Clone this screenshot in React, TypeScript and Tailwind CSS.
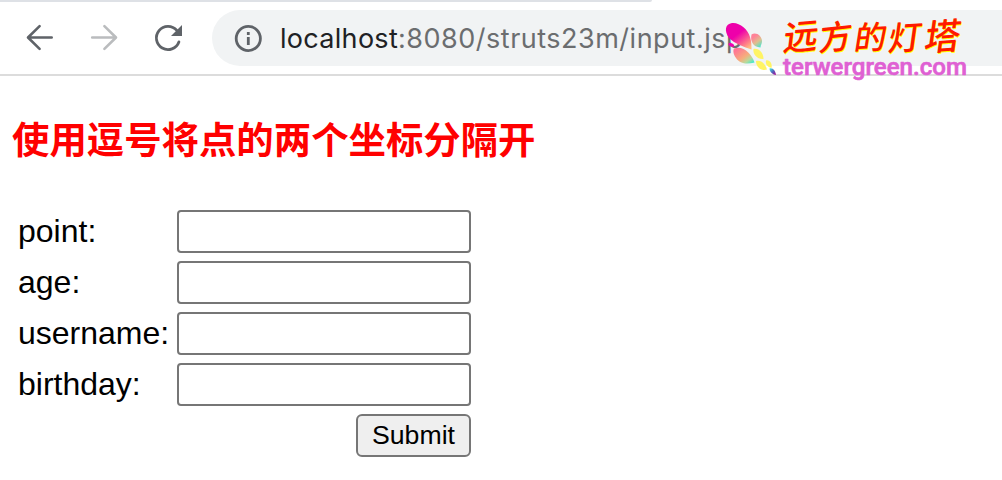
const fields = ["point", "age", "username", "birthday"];

function BackIcon() {
  return (
    <svg className="h-[30px] w-[30px] text-[#5f6368]" viewBox="0 0 30 30" fill="none" stroke="currentColor" strokeWidth="2.6" strokeLinecap="round" strokeLinejoin="round">
      <path d="M26.7 14.500H3.2M14.6 3.1L3 14.500l11.6 11.4" />
    </svg>
  );
}

function ForwardIcon() {
  return (
    <svg className="h-[30px] w-[30px] text-[#babcbe]" viewBox="0 0 30 30" fill="none" stroke="currentColor" strokeWidth="2.6" strokeLinecap="round" strokeLinejoin="round">
      <path d="M3.2 14.500h23.5M15.4 3.1L27 14.500 15.4 25.9" />
    </svg>
  );
}

function ReloadIcon() {
  return (
    <svg className="h-[30px] w-[30px]" viewBox="0 0 30 30" fill="none">
      <path d="M25.900 18.900A11.600 11.600 0 1 1 23.800 7.400" stroke="#5f6368" strokeWidth="2.8" strokeLinecap="round" />
      <path d="M29 2v11H18z" fill="#5f6368" />
    </svg>
  );
}

function InfoIcon() {
  return (
    <svg className="h-7 w-7" viewBox="0 0 28 28" fill="none">
      <circle cx="14.300" cy="14.500" r="12.1" stroke="#5f6368" strokeWidth="2.8" />
      <path d="M12.900 8h2.8v2.9h-2.8zM12.900 13h2.8v8h-2.8z" fill="#5f6368" />
    </svg>
  );
}

function ButterflyLogo() {
  return (
    <svg className="absolute left-0 top-0 h-[65px] w-[60px]" viewBox="720 15 60 65">
      <defs>
        <linearGradient id="upper" x1="0.2" y1="0.15" x2="0.85" y2="1">
          <stop offset="0.35" stopColor="#ee00aa" />
          <stop offset="0.8" stopColor="#ff7f88" />
          <stop offset="1" stopColor="#ffc080" />
        </linearGradient>
        <linearGradient id="lower" x1="0" y1="0" x2="1" y2="1">
          <stop offset="0.15" stopColor="#ff7795" />
          <stop offset="0.55" stopColor="#f6ad7c" />
          <stop offset="0.75" stopColor="#b9d99b" />
          <stop offset="0.95" stopColor="#38ead0" />
        </linearGradient>
        <linearGradient id="side" x1="0.2" y1="0" x2="0.8" y2="1">
          <stop offset="0.2" stopColor="#ff8297" />
          <stop offset="0.6" stopColor="#e0bf8e" />
          <stop offset="1" stopColor="#45e6ce" />
        </linearGradient>
        <linearGradient id="tip" x1="0" y1="0" x2="1" y2="1">
          <stop offset="0.1" stopColor="#49d8e0" />
          <stop offset="0.5" stopColor="#4d62bc" />
          <stop offset="1" stopColor="#b40092" />
        </linearGradient>
      </defs>
      <path d="M732 23C739 22 748 29 750 37C751.500 42 751.500 46 751.500 49.500C744 47 735 44 729 38C724 31 725 24 732 23Z" fill="url(#upper)" />
      <path d="M729 43C731 42.500 735 44 734 46.500C731 47.500 727 45 729 43Z" fill="#f000b1" />
      <path d="M734 48.500C743 45 752 54 754.500 62.500C747 64.500 740 64 736 58C733 54 733 50 734 48.500Z" fill="url(#lower)" />
      <path d="M751.500 34.500C756 31.500 762 36 762 41C762 44 760.500 45 760.500 47.500C753 47 750 41 751.500 34.500Z" fill="url(#side)" />
      <path d="M753.500 49C759 48 763.500 53 763.500 59C757 59.500 752.500 54 753.500 49Z" fill="#fff463" />
      <path d="M756 61C761 59.500 765.500 64 767 69.500C761 71.500 756 67 756 61Z" fill="#fff463" />
      <path d="M766 60.500C770 59.500 772.500 64 771.500 68C767.500 67 765 64 766 60.500Z" fill="#fff463" />
      <path d="M769.500 68.500C773 67.500 775.500 71 776 75C773 75 769.500 72 769.500 68.500Z" fill="url(#tip)" />
    </svg>
  );
}

const brush = [
  { char: "远", x: 782, y: 51, size: 35, turn: -5 },
  { char: "方", x: 818, y: 51, size: 33, turn: -6 },
  { char: "的", x: 853, y: 50, size: 32, turn: -3 },
  { char: "灯", x: 887, y: 51, size: 33, turn: -4 },
  { char: "塔", x: 923, y: 51, size: 36, turn: -4 },
];

function Watermark() {
  return (
    <div className="absolute left-[720px] top-[15px] h-[65px] w-[260px]">
      <ButterflyLogo />
      <svg className="absolute left-[50px] top-[-15px] h-[90px] w-[222px] overflow-visible" viewBox="770 0 222 90">
        {brush.map(({ char, x, y, size, turn }) => (
          <g key={char} transform={`translate(${x} ${y}) rotate(${turn}) skewX(-12)`} fontFamily="Noto Sans CJK SC, sans-serif" fontSize={size} fontWeight="500">
            <text fill="#ff1900" className="[text-shadow:1px_1px_0_#ffff00]">{char}</text>
          </g>
        ))}
        <text x="783" y="74.500" textLength="184" lengthAdjust="spacingAndGlyphs" fontFamily="Roboto, sans-serif" fontSize="23" fontWeight="500" fill="#df60d3" stroke="#df60d3" strokeWidth="0.6" strokeLinejoin="round">terwergreen.com</text>
      </svg>
    </div>
  );
}

export default function App() {
  return (
    <div className="relative h-[480px] w-[1002px] overflow-hidden bg-white font-['Liberation_Sans',sans-serif] text-black">
      <div className="h-[2px] w-[652px] rounded-br-full bg-[#dee1e6]" />
      <header className="flex h-[74px] items-center border-b-2 border-[#dcdcdc] pl-[25px]">
        <nav className="flex gap-[34px]">
          <BackIcon />
          <ForwardIcon />
          <ReloadIcon />
        </nav>
        <div className="ml-[29px] flex h-14 flex-1 items-center rounded-l-full bg-[#f1f3f4] pl-[22px]">
          <InfoIcon />
          <div className="ml-[18px] whitespace-nowrap pt-[2px] font-['Inter',sans-serif] text-[27px] leading-8 tracking-[0.5px] text-[#6b6d6f]">
            <span className="tracking-[0.3px] text-[#202124]">localhost</span>:8080/struts23m/input.jsp
          </div>
        </div>
      </header>
      <main className="pl-3">
        <h1 className="pt-[36px] font-['Noto_Sans_CJK_SC',sans-serif] text-[37.4px] font-bold leading-[52px] text-[#ff0000]">使用逗号将点的两个坐标分隔开</h1>
        <form className="mt-[46px] flex w-[459px] flex-col gap-2 pl-[6px]" onSubmit={(event) => event.preventDefault()}>
          {fields.map((field) => (
            <label key={field} className="flex h-[43px] items-center justify-between text-[32px]">
              <span className="leading-[41px]">{field}:</span>
              <input type="text" name={field} className="h-[43px] w-[294px] rounded-[4px] border-2 border-[#767676] bg-white px-1 text-[27px]" />
            </label>
          ))}
          <button type="submit" className="h-[43px] w-[115px] self-end rounded-[6px] border-2 border-[#767676] bg-[#efefef] text-[26.67px] leading-[37px]">Submit</button>
        </form>
      </main>
      <Watermark />
    </div>
  );
}
